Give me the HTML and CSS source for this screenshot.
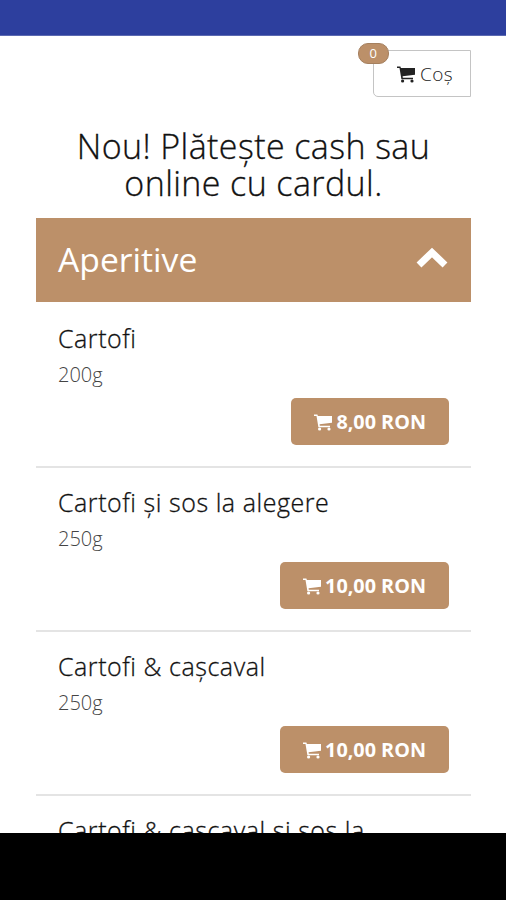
FILE: index.html
```html
<!DOCTYPE html>
<html lang="ro">
<head>
  <meta charset="UTF-8">
  <meta name="viewport" content="width=device-width, initial-scale=1.0">
  <title>Meniu</title>
  <link rel="stylesheet" href="styles.css">
</head>
<body>

<svg class="sprite" width="0" height="0">
  <symbol id="cart" viewBox="0 0 18 17">
    <path d="M0 0.5h3.4l0.5 1.5H18v6.8L5.6 10.3l0.2 1.4H16v1.5H4.4L2.5 2H0z"/>
    <circle cx="5.6" cy="15" r="1.6"/>
    <circle cx="15" cy="15" r="1.6"/>
  </symbol>
</svg>

<div class="status-bar"></div>

<main class="page">
  <div class="top">
    <button class="cart-btn">
      <span class="badge">0</span>
      <svg class="cart-icon"><use href="#cart"/></svg>
      <span>Coș</span>
    </button>
  </div>

  <h1 class="notice">Nou! Plătește cash sau online cu cardul.</h1>

  <div class="category">
    <h2>Aperitive</h2>
    <svg class="chevron" viewBox="0 0 32 21"><path d="M3 18 16 5.5 29 18"/></svg>
  </div>

  <div class="item">
    <h3>Cartofi</h3>
    <p>200g</p>
    <button class="price"><svg class="cart-icon"><use href="#cart"/></svg><span>8,00 RON</span></button>
  </div>
  <div class="item">
    <h3>Cartofi și sos la alegere</h3>
    <p>250g</p>
    <button class="price"><svg class="cart-icon"><use href="#cart"/></svg><span>10,00 RON</span></button>
  </div>
  <div class="item">
    <h3>Cartofi &amp; cașcaval</h3>
    <p>250g</p>
    <button class="price"><svg class="cart-icon"><use href="#cart"/></svg><span>10,00 RON</span></button>
  </div>
  <div class="item">
    <h3>Cartofi &amp; cașcaval și sos la</h3>
  </div>
</main>

<div class="nav-bar"></div>

</body>
</html>
```
FILE: styles.css
```css
* {
  box-sizing: border-box;
}
body {
  display: flex;
  flex-direction: column;
  height: 900px;
  margin: 0;
  overflow: hidden;
  background-color: #fff;
  color: #111;
  font-family: "Open Sans", sans-serif;
}
h1, h2, h3, p {
  margin: 0;
  font-weight: 300;
}
h1, h3 {
  -webkit-text-stroke: 0.3px currentColor;
}
button {
  font-family: inherit;
  cursor: pointer;
}
.sprite {
  position: absolute;
}
.status-bar {
  flex: 0 0 36px;
  background-color: #2d3f9e;
  border-bottom: 1px solid #5b69b1;
}
.page {
  flex: 1;
  min-height: 0;
  overflow: hidden;
  padding: 14px 35px 0 36px;
}
.top {
  display: flex;
  justify-content: flex-end;
}
.cart-btn {
  position: relative;
  display: flex;
  align-items: center;
  justify-content: center;
  gap: 5px;
  width: 98px;
  height: 47px;
  padding: 0 0 0 6px;
  border: 1px solid #c4c4c4;
  border-radius: 0 0 0 5px;
  background-color: #fff;
  color: #222;
  font-size: 19px;
  font-weight: 300;
  letter-spacing: 0.4px;
}
.cart-icon {
  width: 18px;
  height: 17px;
  margin-top: 2px;
  fill: currentColor;
}
.badge {
  position: absolute;
  top: -8px;
  left: -16px;
  width: 31px;
  height: 21px;
  border: 1px solid #a5805f;
  border-radius: 10px;
  background-color: #bc9069;
  color: #fff;
  font-size: 13px;
  font-weight: 400;
  line-height: 19px;
  text-align: center;
}
.notice {
  margin-top: 31px;
  height: 90px;
  font-size: 34px;
  letter-spacing: 0.4px;
  line-height: 37px;
  text-align: center;
}
.category {
  display: flex;
  align-items: center;
  justify-content: space-between;
  height: 84px;
  padding: 0 23px 0 22px;
  background-color: #bc9069;
  color: #fff;
}
.category h2 {
  margin-bottom: 2px;
  font-size: 33.7px;
  font-weight: 400;
  line-height: 46px;
}
.chevron {
  width: 32px;
  height: 21px;
  margin-bottom: 6px;
  fill: none;
  stroke: #fff;
  stroke-width: 7;
}
.item {
  display: flex;
  flex-direction: column;
  height: 164px;
  padding: 17px 22px 0;
  border-bottom: 2px solid #e4e4e4;
}
.category + .item {
  height: 166px;
  padding-top: 19px;
}
.item h3 {
  font-size: 25px;
  letter-spacing: 0.55px;
  line-height: 34px;
}
.item p {
  margin-top: 6px;
  color: #444;
  font-size: 20px;
  line-height: 28px;
}
.price {
  display: flex;
  align-items: center;
  align-self: flex-end;
  gap: 4px;
  height: 47px;
  margin-top: 9px;
  padding: 0 23px;
  border: 0;
  border-radius: 5px;
  background-color: #bc9069;
  color: #fff;
  font-size: 19.8px;
  font-weight: 700;
}
.nav-bar {
  flex: 0 0 67px;
  background-color: #000;
}
```
